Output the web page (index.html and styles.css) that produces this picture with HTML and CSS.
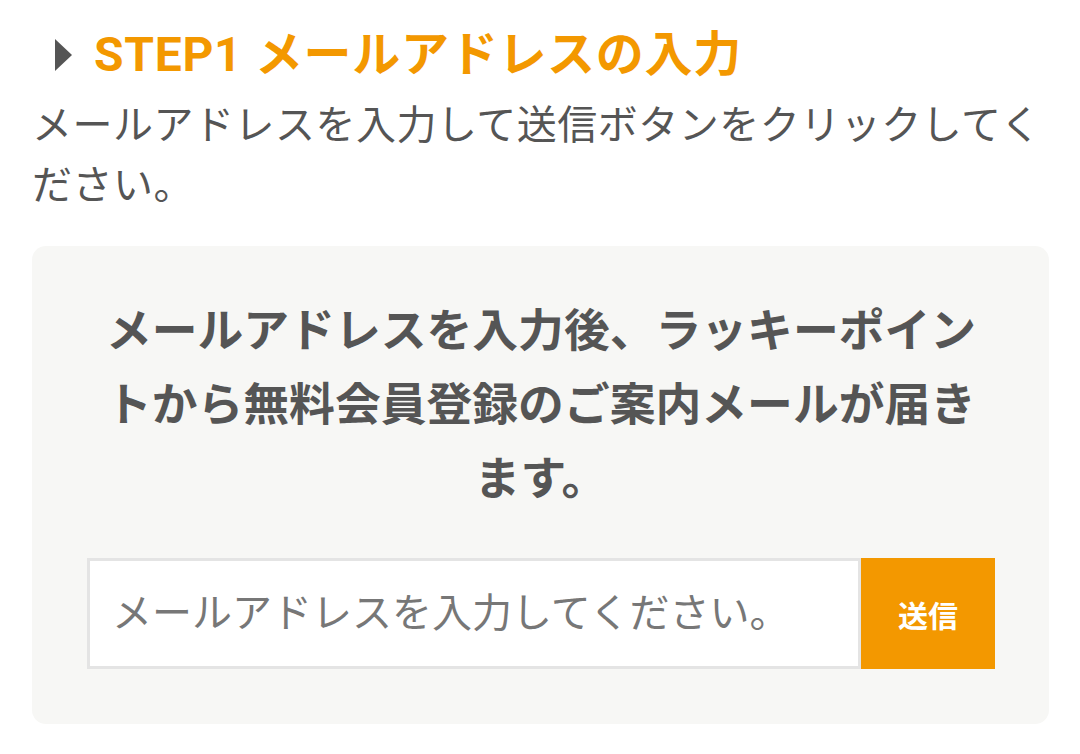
FILE: index.html
```html
<!DOCTYPE html>
<html lang="ja">
<head>
<meta charset="utf-8">
<link rel="stylesheet" href="styles.css">
</head>
<body>
<main class="page">
  <h2 class="step-title"><span class="step-arrow"></span>STEP1 メールアドレスの入力</h2>
  <p class="lead">メールアドレスを入力して送信ボタンをクリックしてください。</p>
  <section class="panel">
    <p class="panel-text">メールアドレスを入力後、ラッキーポイントから無料会員登録のご案内メールが届きます。</p>
    <form class="mail-form">
      <input class="mail-input" type="email" placeholder="メールアドレスを入力してください。">
      <button class="mail-submit" type="button">送信</button>
    </form>
  </section>
</main>
</body>
</html>
```

FILE: styles.css
```css
html, body {
  margin: 0;
  padding: 0;
  background: #ffffff;
}
body {
  font-family: Roboto, "Noto Sans CJK JP", sans-serif;
  color: #555555;
}
.page {
  padding: 26px 31px 0 32px;
}
.step-title {
  display: flex;
  align-items: center;
  margin: 0;
  font-size: 48px;
  line-height: 58px;
  font-weight: 700;
  color: #f39800;
  letter-spacing: 0.7px;
}
.step-arrow {
  width: 0;
  height: 0;
  border-top: 16px solid transparent;
  border-bottom: 16px solid transparent;
  border-left: 17px solid #555555;
  margin: 0 22px 0 23px;
}
.lead {
  margin: 12px 0 0 0;
  font-size: 40px;
  letter-spacing: 0.5px;
  line-height: 60px;
  color: #555555;
}
.panel {
  margin-top: 30px;
  background: #f7f7f5;
  border-radius: 14px;
  padding: 49px 54px 55px 55px;
}
.panel-text {
  margin: 0 auto;
  width: 890px;
  text-align: center;
  font-size: 45.8px;
  line-height: 74px;
  font-weight: 700;
  color: #555555;
}
.mail-form {
  display: flex;
  margin-top: 41px;
  height: 111px;
}
.mail-input {
  flex: 1;
  box-sizing: border-box;
  height: 111px;
  border: 3px solid #e4e4e4;
  background: #ffffff;
  padding: 0 22px;
  font-family: Roboto, "Noto Sans CJK JP", sans-serif;
  font-size: 40px;
  color: #555555;
  outline: none;
}
.mail-input::placeholder {
  color: #777777;
}
.mail-submit {
  width: 134px;
  height: 111px;
  border: none;
  background: #f39800;
  color: #ffffff;
  font-family: Roboto, "Noto Sans CJK JP", sans-serif;
  font-size: 30px;
  font-weight: 700;
  padding: 0;
}
```
